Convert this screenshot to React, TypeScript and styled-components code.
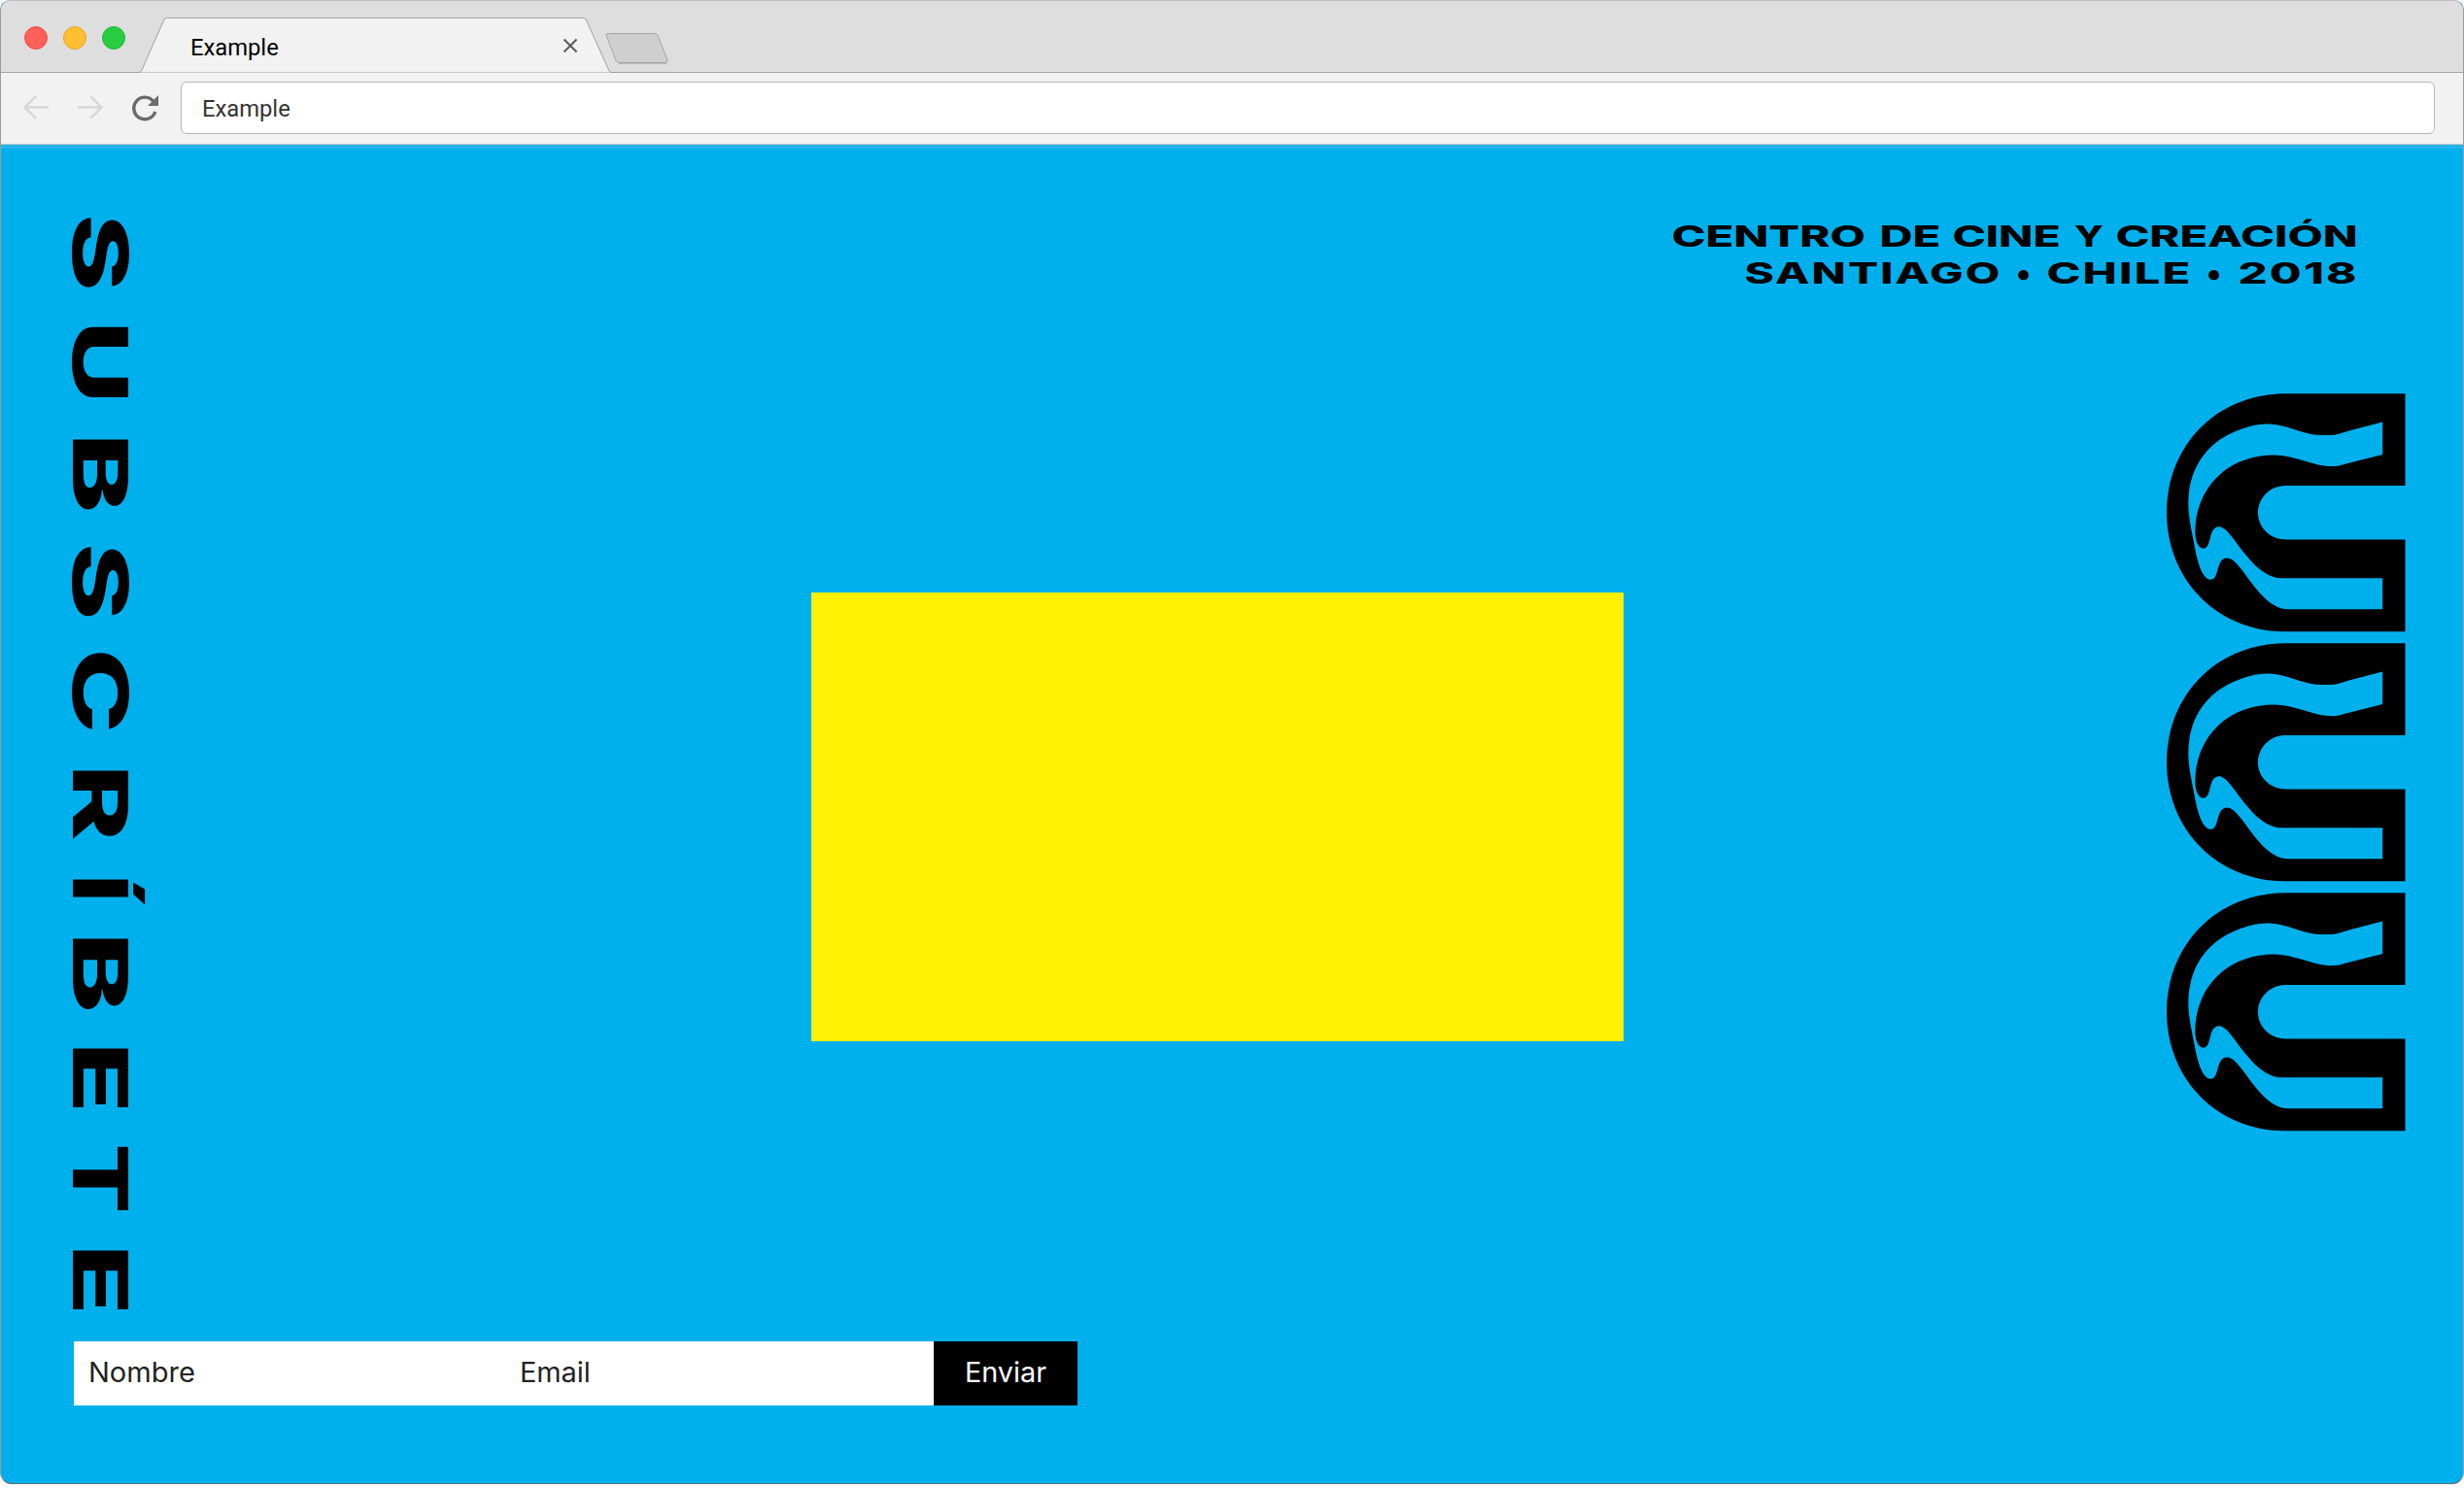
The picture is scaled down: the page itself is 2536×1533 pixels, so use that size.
import React, { useLayoutEffect, useState } from "react";
import styled, { createGlobalStyle } from "styled-components";

const GlobalStyle = createGlobalStyle`
  * { box-sizing: border-box; }
  html, body { margin: 0; padding: 0; background: #fff; }
  body { width: 2536px; height: 1533px; overflow: hidden; }
`;

const sans = '"Inter", "Liberation Sans", sans-serif';
const chromeFont = '"Roboto", "Liberation Sans", sans-serif';

/* Text stretched along its reading direction until its ink is `length` px long. */
const InkBox = styled.span<{ $length: number; $line: number; $before: number; $vertical?: boolean }>`
  display: block;
  flex: none;
  writing-mode: ${(p) => (p.$vertical ? "vertical-rl" : "horizontal-tb")};
  inline-size: ${(p) => p.$length}px;
  block-size: ${(p) => p.$line}px;
  margin-inline-start: ${(p) => p.$before}px;
  line-height: ${(p) => p.$line}px;
`;

const Ink = styled.span<{ $family: string; $size: number; $weight: number; $spacing: number }>`
  display: inline-block;
  white-space: pre;
  transform-origin: 0 0;
  font-family: ${(p) => p.$family};
  font-size: ${(p) => p.$size}px;
  font-weight: ${(p) => p.$weight};
  letter-spacing: ${(p) => p.$spacing}px;
`;

type StretchProps = {
  text: string;
  length: number;
  size: number;
  line: number;
  weight?: number;
  family?: string;
  spacing?: number;
  before?: number;
  vertical?: boolean;
};

function Stretch({ text, length, size, line, weight = 400, family = sans, spacing = 0, before = 0, vertical }: StretchProps) {
  const [fit, setFit] = useState({ scale: 1, shift: 0 });
  useLayoutEffect(() => {
    const ctx = document.createElement("canvas").getContext("2d");
    if (!ctx) return;
    ctx.font = `${weight} ${size}px ${family}`;
    (ctx as any).letterSpacing = `${spacing}px`;
    const m = ctx.measureText(text);
    const ink = m.actualBoundingBoxRight + m.actualBoundingBoxLeft;
    setFit({ scale: length / ink, shift: m.actualBoundingBoxLeft });
  }, [text, length, size, weight, family, spacing]);
  const transform = vertical
    ? `scaleY(${fit.scale}) translateY(${fit.shift}px)`
    : `scaleX(${fit.scale}) translateX(${fit.shift}px)`;
  return (
    <InkBox $length={length} $line={line} $before={before} $vertical={vertical}>
      <Ink $family={family} $size={size} $weight={weight} $spacing={spacing} style={{ transform }}>
        {text}
      </Ink>
    </InkBox>
  );
}

const Window = styled.div`
  width: 2536px;
  height: 1528px;
  display: flex;
  flex-direction: column;
  overflow: hidden;
  border: 1px solid #9b9b9b;
  border-top-color: #bdbdbd;
  border-bottom-color: #5f6f78;
  border-radius: 10px 10px 12px 12px;
  background: #00b0ed;
`;

const TabBar = styled.div`
  height: 74px;
  flex: none;
  display: flex;
  padding-left: 24px;
  background: #dedede;
  border-bottom: 1px solid #a0a0a0;
`;

const Lights = styled.div`
  display: flex;
  gap: 16px;
  padding-top: 26px;
`;

const Light = styled.i<{ $fill: string; $edge: string }>`
  width: 24px;
  height: 24px;
  border-radius: 50%;
  background: ${(p) => p.$fill};
  border: 1px solid ${(p) => p.$edge};
`;

const Tab = styled.div`
  width: 486px;
  height: 58px;
  margin: 16px 0 -1px 15px;
  display: grid;
  flex: none;
  > * { grid-area: 1 / 1; }
`;

const TabLabel = styled.div`
  display: flex;
  justify-content: space-between;
  padding: 17px 35px 0 53px;
`;

const NewTab = styled.svg`
  margin: 31px 0 0 -10.5px;
`;

const Toolbar = styled.div`
  height: 74px;
  flex: none;
  display: flex;
  align-items: flex-start;
  padding: 9px 29px 0 22px;
  background: #f2f2f2;
  border-bottom: 1px solid #c4c4c4;
`;

const NavIcons = styled.svg`
  flex: none;
  margin-right: 23px;
`;

const AddressBar = styled.div`
  flex: 1;
  height: 54px;
  padding: 12px 0 0 22px;
  border: 1px solid #b5b5b5;
  border-radius: 6px;
  background: #fff;
  color: #333;
`;

const Page = styled.main`
  flex: 1;
  display: grid;
  grid-template-columns: 834px 835.5px 1fr;
  grid-template-rows: 1232px 1fr;
  box-shadow: inset 0 4px 0 #22b4ea;
`;

const Side = styled.div`
  padding: 74px 0 0 56.5px;
`;

const VerticalWord = styled.h1`
  display: flex;
  flex-direction: column;
  width: 90px;
  margin: 0;
  color: #000;
`;

const LetterSlot = styled.div<{ $gap: number }>`
  padding-top: ${(p) => p.$gap}px;
`;

const Center = styled.div`
  padding-top: 460.5px;
`;

const Feature = styled.div`
  height: 462.5px;
  background: #fff004;
`;

const Right = styled.div`
  display: flex;
  flex-direction: column;
  align-items: flex-end;
`;

const Heading = styled.header`
  display: flex;
  flex-direction: column;
  align-items: flex-end;
  padding: 75px 111px 0 0;
`;

const Line = styled.div`
  display: flex;
  height: 38px;
`;

const Logo = styled.div`
  display: flex;
  flex-direction: column;
  gap: 11.5px;
  padding: 105px 59.5px 0 0;
`;

const Mark = styled.svg`
  display: block;
  width: 245.5px;
  height: 245.5px;
`;

const Form = styled.form`
  grid-column: 1 / -1;
  display: flex;
  height: 66px;
  padding-left: 75px;
`;

const Field = styled.label<{ $width: number; $inset: number }>`
  width: ${(p) => p.$width}px;
  padding: 14px 0 0 ${(p) => p.$inset}px;
  background: #fff;
  color: #222;
`;

const Submit = styled.button`
  width: 148px;
  padding: 14px 0 0 34px;
  display: flex;
  align-items: flex-start;
  border: 0;
  background: #000;
  color: #fff;
`;

/* glyph, ink length, gap before */
const letters: [string, number, number][] = [
  ["S", 73, 0],
  ["U", 74, 39.5],
  ["B", 73.5, 42],
  ["S", 72.6, 36.5],
  ["C", 80, 37.5],
  ["R", 72, 41],
  ["Í", 27, 40],
  ["B", 74, 34],
  ["E", 61.5, 39.5],
  ["T", 67, 39],
  ["E", 61.5, 40.5],
];

const lines: [string, number, number][][] = [
  [
    ["CENTRO", 196.5, 0],
    ["DE", 59.5, 17],
    ["CINE", 108, 15.5],
    ["Y", 29.5, 16],
    ["CREACIÓN", 245, 15],
  ],
  [
    ["SANTIAGO", 260, 0],
    ["•", 11.5, 20],
    ["CHILE", 144.5, 20],
    ["•", 11.5, 20.5],
    ["2018", 119.5, 20],
  ],
];

function WaveMark() {
  return (
    <Mark viewBox="90 45 737 736">
      <path
        fill="#000"
        fillRule="evenodd"
        d="M458 45H827V330H458C409 330 372 368 372 413C372 459 409 496 458 496H827V781H458C245 781 90 620 90 413C90 206 245 45 458 45Z
        M757 133L656 159C640 163 623 171 607 173C550 177 520 167 486 156C430 138 394 133 344 147C226 179 157 265 157 385C157 425 166 463 174 505C180 538 187 575 202 602C214 623 233 628 242 607C250 588 252 553 276 553C291 553 303 566 315 581C353 628 401 712 467 712H757V616H450C374 616 328 531 281 475C269 461 253 450 238 462C221 475 226 522 205 524C186 524 178 497 178 474C178 332 282 235 422 235C486 235 550 273 607 270C623 269 640 263 656 259L757 234Z"
      />
    </Mark>
  );
}

export default function App() {
  return (
    <>
      <GlobalStyle />
      <Window>
        <TabBar>
          <Lights>
            <Light $fill="#ff6058" $edge="#e4514a" />
            <Light $fill="#ffbf2f" $edge="#e2a52a" />
            <Light $fill="#28cd42" $edge="#22b53a" />
          </Lights>
          <Tab>
            <svg width="486" height="58" viewBox="0 0 486 58">
              <path d="M0 57.5L1 56.5L25 3Q26 1.5 28 1.5H456Q458 1.5 459 3L483 56L485 57.5Z" fill="#f2f2f2" />
              <path d="M0 57.5L1.5 56L25 3Q26 1.5 28 1.5H456Q458 1.5 459 3L483 56L485 57.5" fill="none" stroke="#a0a0a0" />
            </svg>
            <TabLabel>
              <Stretch text="Example" length={89} size={24} line={30} family={chromeFont} />
              <svg width="16" height="28" viewBox="0 0 16 28">
                <path d="M1.5 6.5L14.5 19.5M14.5 6.5L1.5 19.5" stroke="#5b5b5b" strokeWidth="2" />
              </svg>
            </TabLabel>
          </Tab>
          <NewTab width="68" height="36" viewBox="0 0 68 36">
            <path d="M5 2.5H54Q56 2.5 57 4.5L67 30Q67.5 32.5 65 32.5H18Q15 32.5 14 30.5L4 4.5Q3.5 2.5 5 2.5Z" fill="#cfcfcf" stroke="#a5a5a5" />
            <path d="M16 33.5H66" stroke="#b9b9b9" />
          </NewTab>
        </TabBar>
        <Toolbar>
          <NavIcons width="140" height="54" viewBox="0 0 140 54" fill="none">
            <path d="M27 26.5H2.5M14 15L2.5 26.5L14 38" stroke="#d8d8d8" strokeWidth="2.6" />
            <path d="M57 26.5H81.5M70 15L81.5 26.5L70 38" stroke="#d8d8d8" strokeWidth="2.6" />
            <path d="M135 20.5A11.3 11.3 0 1 0 136.8 31" stroke="#6a6a6a" strokeWidth="3.4" />
            <path d="M140 14V25H129Z" fill="#6a6a6a" />
          </NavIcons>
          <AddressBar>
            <Stretch text="Example" length={89} size={24} line={30} family={chromeFont} />
          </AddressBar>
        </Toolbar>
        <Page>
          <Side>
            <VerticalWord>
              {letters.map(([glyph, length, gap], i) => (
                <LetterSlot key={i} $gap={gap}>
                  <Stretch text={glyph} length={length} size={78} line={90} weight={800} vertical />
                </LetterSlot>
              ))}
            </VerticalWord>
          </Side>
          <Center>
            <Feature />
          </Center>
          <Right>
            <Heading>
              {lines.map((words, i) => (
                <Line key={i}>
                  {words.map(([word, length, gap], j) => (
                    <Stretch
                      key={j}
                      text={word}
                      length={length}
                      before={gap}
                      size={word === "•" ? 33 : 29.6}
                      line={38}
                      weight={800}
                      spacing={i && word !== "•" ? 1.4 : 0}
                    />
                  ))}
                </Line>
              ))}
            </Heading>
            <Logo>
              <WaveMark />
              <WaveMark />
              <WaveMark />
            </Logo>
          </Right>
          <Form>
            <Field $width={444} $inset={17}>
              <Stretch text="Nombre" length={106.5} size={28} line={36} />
            </Field>
            <Field $width={440.5} $inset={17}>
              <Stretch text="Email" length={69} size={28} line={36} />
            </Field>
            <Submit type="button">
              <Stretch text="Enviar" length={81.5} size={28} line={36} />
            </Submit>
          </Form>
        </Page>
      </Window>
    </>
  );
}
